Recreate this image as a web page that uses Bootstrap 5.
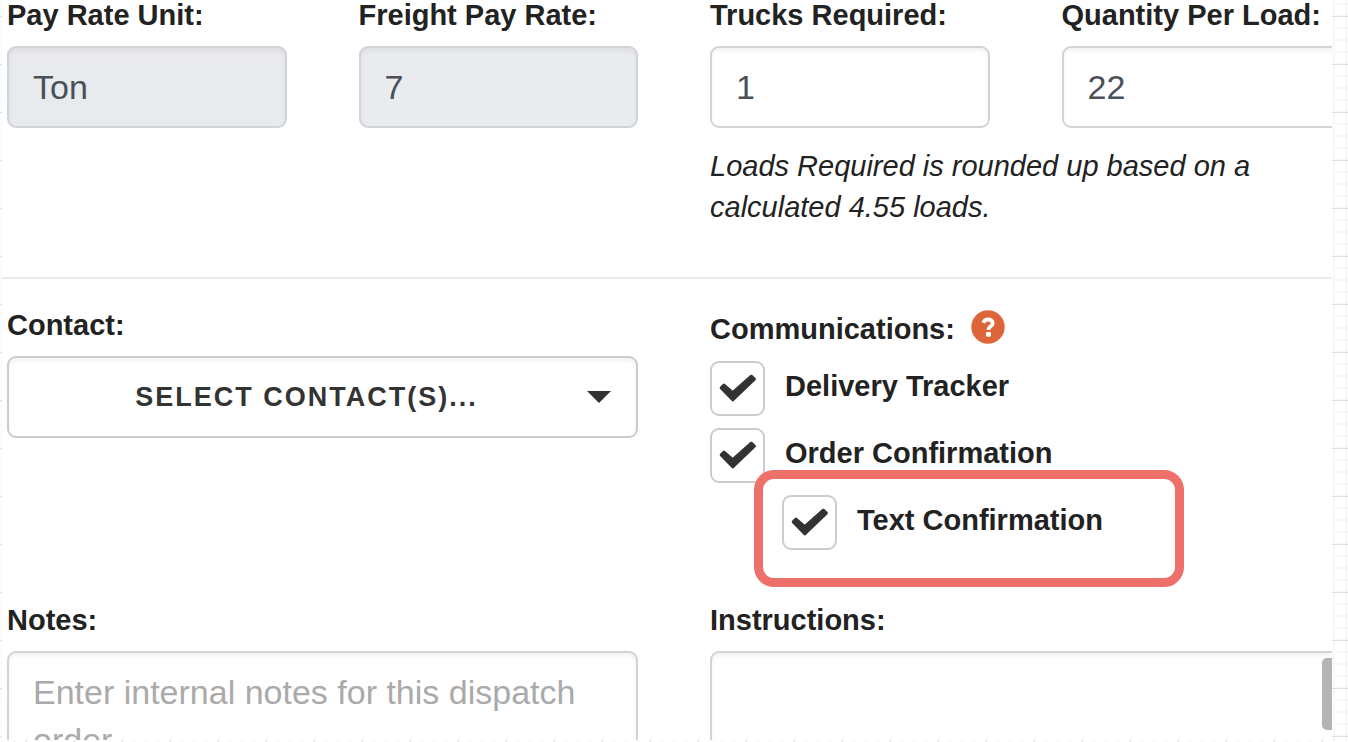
<!DOCTYPE html>
<html lang="en">
<head>
<meta charset="utf-8">
<meta name="viewport" content="width=device-width, initial-scale=1">
<title>Dispatch Order</title>
<link rel="stylesheet" href="https://cdn.jsdelivr.net/npm/bootstrap@5.3.0/dist/css/bootstrap.min.css">
<style>
  body {
    height: 100vh;
    font-family: "Liberation Sans", Arial, sans-serif;
    color: #222;
    background-color: #fff;
    /* graph paper: 12px minor squares, 48px major squares */
    background-image:
      linear-gradient(#dedede 1px, transparent 1px),
      linear-gradient(90deg, #dedede 1px, transparent 1px),
      linear-gradient(#f8f8f8 2px, transparent 2px),
      linear-gradient(90deg, #f8f8f8 2px, transparent 2px);
    background-size: 48px 48px, 48px 48px, 12px 12px, 12px 12px;
    background-position: 0 16px, 26px 0, 0 3px, 1px 0;
  }
  .order-panel { height: calc(100vh - 2px); margin: 0 16px 0 2px; background: #fff; }
  .order-body { margin: 0 -9px 0 5px; }
  .order-body .row { --bs-gutter-x: 72px; }
  .field-label { display: block; font-size: 29px; line-height: 30px; font-weight: 700; white-space: nowrap; }
  .field-box {
    margin-top: 16px; height: 82px; padding: 0 24px;
    border: 2px solid #d0d4d9; border-radius: 9px;
    font-size: 34px; line-height: 48px; color: #495057;
    box-shadow: inset 0 3px 4px rgba(0, 0, 0, .05);
  }
  .field-box:disabled { background: #eaebef; }
  .field-box.unit-box { background: linear-gradient(#eaeaee 16px, #e7ebee 16px); }
  textarea.field-box { height: 160px; padding-top: 15px; resize: none; overflow: hidden; }
  .field-box::placeholder { color: #aaa; opacity: 1; }
  .hint { margin: 18px 0 0; font-size: 29px; line-height: 41px; font-style: italic; }
  .section-rule { margin: 49px 0 31px -5px; height: 2px; border: 0; background: #ebebeb; opacity: 1; }
  .contact-btn {
    margin-top: 16px; height: 82px; padding: 0 25px 0 17px;
    border: 2px solid #ccc; border-radius: 9px; background: #fff; color: #333;
    font-size: 27px; font-weight: 700; letter-spacing: 2px;
    box-shadow: inset 0 3px 4px rgba(0, 0, 0, .05);
  }
  .comm { padding-top: 4px; }
  .help-btn { width: 34px; height: 34px; margin: -4px 0 0 16px; }
  .checks { margin: 17px 0 55px; gap: 12px; }
  .check-line { gap: 20px; }
  .check-line label { margin-top: 10px; }
  .tick {
    appearance: none; flex: none; width: 55px; height: 55px; margin: 0;
    border: 2px solid #ccc; border-radius: 9px; background: #fff;
  }
  .tick:checked {
    background: #fff url("data:image/svg+xml,%3Csvg xmlns='http://www.w3.org/2000/svg' viewBox='0 0 55 55'%3E%3Cpath d='M14 24L22.7 31.7L41.3 15.2L44.4 18.2L22.7 38.8L11.2 26.9Z' fill='%23333' stroke='%23333' stroke-width='3' stroke-linejoin='round'/%3E%3C/svg%3E") border-box 0 0 / 55px 55px no-repeat;
  }
  .sub-check { margin-left: 72px; }
  .callout-ring {
    top: -25px; left: -28px; width: 430px; height: 117px;
    border: 9px solid #ee706b; border-radius: 20px; pointer-events: none;
  }
  .scroll-thumb { top: 23px; right: 9px; width: 10px; height: 72px; background: #b4b4b4; border-radius: 5px 0 0 5px; }
</style>
</head>
<body class="overflow-hidden">
<main class="order-panel overflow-hidden">
  <form class="order-body">
    <div class="row">
      <div class="col-3">
        <label class="field-label" for="payUnit">Pay Rate Unit:</label>
        <input class="field-box unit-box w-100" id="payUnit" type="text" value="Ton" disabled>
      </div>
      <div class="col-3">
        <label class="field-label" for="payRate">Freight Pay Rate:</label>
        <input class="field-box w-100" id="payRate" type="text" value="7" disabled>
      </div>
      <div class="col-6">
        <div class="row">
          <div class="col-6">
            <label class="field-label" for="trucks">Trucks Required:</label>
            <input class="field-box w-100" id="trucks" type="text" value="1">
          </div>
          <div class="col-6">
            <label class="field-label" for="quantity">Quantity Per Load:</label>
            <input class="field-box w-100" id="quantity" type="text" value="22">
          </div>
        </div>
        <p class="hint">Loads Required is rounded up based on a<br>calculated 4.55 loads.</p>
      </div>
    </div>

    <hr class="section-rule">

    <div class="row">
      <div class="col-6">
        <label class="field-label" for="contact">Contact:</label>
        <button class="contact-btn d-flex align-items-center w-100" id="contact" type="button">
          <span class="flex-grow-1 text-center">SELECT CONTACT(S)...</span>
          <svg width="24" height="12" viewBox="0 0 24 12" aria-hidden="true"><path d="M0 0H24L12 12Z" fill="#333"/></svg>
        </button>
      </div>
      <div class="col-6 comm">
        <div class="d-flex align-items-start">
          <span class="field-label" id="commLabel">Communications:</span>
          <button class="help-btn btn border-0 p-0 d-flex" type="button" aria-label="Help">
            <svg width="34" height="34" viewBox="0 0 34 34" aria-hidden="true">
              <circle cx="17" cy="17" r="16.7" fill="#dc6539"/>
              <path d="M12.2 12.8C13.3 10.5 15 9.5 17.2 9.5C19.8 9.5 21.7 11 21.7 13.2C21.7 16.3 17.4 16.4 17.4 19.9" fill="none" stroke="#fff" stroke-width="3.8"/>
              <rect x="15" y="22" width="5" height="4.8" rx="1.4" fill="#fff"/>
            </svg>
          </button>
        </div>
        <div class="checks d-flex flex-column" role="group" aria-labelledby="commLabel">
          <div class="check-line d-flex">
            <input class="tick" type="checkbox" id="tracker" checked>
            <label class="field-label" for="tracker">Delivery Tracker</label>
          </div>
          <div class="check-line d-flex">
            <input class="tick" type="checkbox" id="orderConf" checked>
            <label class="field-label" for="orderConf">Order Confirmation</label>
          </div>
          <div class="check-line sub-check d-flex position-relative">
            <input class="tick" type="checkbox" id="textConf" checked>
            <label class="field-label" for="textConf">Text Confirmation</label>
            <span class="callout-ring position-absolute"></span>
          </div>
        </div>
      </div>
    </div>

    <div class="row">
      <div class="col-6">
        <label class="field-label" for="notes">Notes:</label>
        <textarea class="field-box w-100" id="notes" placeholder="Enter internal notes for this dispatch order."></textarea>
      </div>
      <div class="col-6">
        <label class="field-label" for="instructions">Instructions:</label>
        <div class="position-relative">
          <textarea class="field-box w-100" id="instructions"></textarea>
          <span class="scroll-thumb position-absolute"></span>
        </div>
      </div>
    </div>
  </form>
</main>
<script src="https://cdn.jsdelivr.net/npm/bootstrap@5.3.0/dist/js/bootstrap.bundle.min.js"></script>
</body>
</html>
